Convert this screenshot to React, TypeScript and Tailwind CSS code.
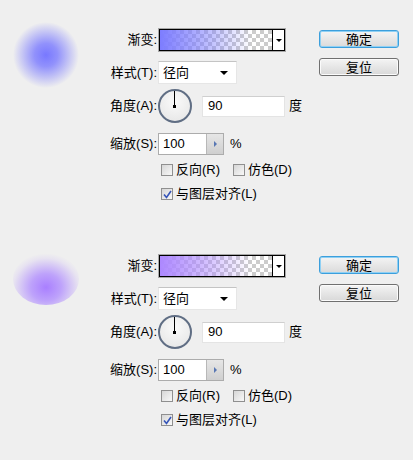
import React from "react";

type PanelProps = {
  blobClass: string;
  swatchClass: string;
};

function Checkbox({ checked }: { checked?: boolean }) {
  return (
    <span className="flex h-[12px] w-[12px] items-center justify-center border border-[#8f8f8f] bg-[linear-gradient(135deg,#d6d6d6,#f8f8f8)]">
      {checked ? (
        <svg width="9" height="9" viewBox="0 0 9 9">
          <path d="M1 4.5 L3.5 7.5 L8 1" fill="none" stroke="#3554b8" strokeWidth="1.6" />
        </svg>
      ) : null}
    </span>
  );
}

function Label({ children }: { children: React.ReactNode }) {
  return <span className="w-[58px] shrink-0 pr-[1px] text-right">{children}</span>;
}

function Panel({ blobClass, swatchClass }: PanelProps) {
  return (
    <div className="flex h-[226px]">
      <div className="w-[100px] shrink-0">
        <div className={blobClass} />
      </div>

      <div className="flex w-[219px] shrink-0 flex-col pt-[28px]">
        <div className="flex h-[24px] items-center">
          <Label>渐变:</Label>
          <div className="flex h-[24px] w-[128px] border border-[#a8a8a8]">
            <div className="flex flex-1 border border-black">
              <div className="flex-1 bg-[conic-gradient(#cccccc_25%,#ffffff_0_50%,#cccccc_0_75%,#ffffff_0)] bg-[length:8px_8px]">
                <div className={swatchClass} />
              </div>
              <div className="flex w-[12px] items-center justify-center border-l border-black bg-white">
                <span className="h-0 w-0 border-x-[3px] border-t-[3px] border-x-transparent border-t-black" />
              </div>
            </div>
          </div>
        </div>

        <div className="mt-[9px] flex h-[23px] items-center">
          <Label>样式(T):</Label>
          <div className="flex h-[23px] w-[79px] items-center justify-between border border-[#e6e6e6] border-t-[#c4c4c4] bg-white pl-[4px] pr-[8px]">
            <span>径向</span>
            <span className="h-0 w-0 border-x-[4px] border-t-[4px] border-x-transparent border-t-black" />
          </div>
        </div>

        <div className="mt-[5px] flex h-[34px] items-center">
          <Label>角度(A):</Label>
          <div className="relative h-[34px] w-[34px] rounded-full border-2 border-[#606e84] bg-[radial-gradient(circle_at_50%_35%,#fafafa,#e4e4e4)]">
            <span className="absolute left-[14px] top-0 h-[15px] w-[1px] bg-black" />
            <span className="absolute left-[13px] top-[14px] h-[3px] w-[3px] bg-black" />
          </div>
          <div className="ml-[10px] flex h-[21px] w-[83px] items-center border border-[#e4e4e4] border-t-[#cfcfcf] bg-white pl-[5px]">
            90
          </div>
          <span className="ml-[4px]">度</span>
        </div>

        <div className="mt-[10px] flex h-[22px] items-center">
          <Label>缩放(S):</Label>
          <div className="flex h-[22px] w-[66px] border border-[#acacac] bg-white">
            <div className="flex flex-1 items-center pl-[4px]">100</div>
            <div className="flex w-[17px] items-center justify-center border-l border-[#b8b8b8] bg-[linear-gradient(#e6e6e6,#cfcfcf)]">
              <span className="h-0 w-0 border-y-[3px] border-l-[3px] border-y-transparent border-l-[#5877b3]" />
            </div>
          </div>
          <span className="ml-[6px]">%</span>
        </div>

        <div className="ml-[61px] mt-[8px] flex h-[14px] items-center">
          <Checkbox />
          <span className="ml-[3px] w-[57px]">反向(R)</span>
          <Checkbox />
          <span className="ml-[3px]">仿色(D)</span>
        </div>

        <div className="ml-[61px] mt-[10px] flex h-[14px] items-center">
          <Checkbox checked />
          <span className="ml-[3px]">与图层对齐(L)</span>
        </div>
      </div>

      <div className="flex flex-col gap-[10px] pt-[30px]">
        <button
          type="button"
          className="flex h-[18px] w-[80px] items-center justify-center rounded-[3px] border border-[#3c9fdc] bg-[linear-gradient(#f4f4f4,#dadada)] shadow-[inset_0_0_0_1px_#8fd0f4] text-[13px] leading-none"
        >
          确定
        </button>
        <button
          type="button"
          className="flex h-[18px] w-[80px] items-center justify-center rounded-[3px] border border-[#707070] bg-[linear-gradient(#f4f4f4,#d8d8d8)] shadow-[inset_0_0_0_1px_#fbfbfb] text-[13px] leading-none"
        >
          复位
        </button>
      </div>
    </div>
  );
}

export default function App() {
  return (
    <div className="min-h-[460px] w-[413px] bg-[#efefef] font-['Liberation_Sans','Noto_Sans_CJK_SC',sans-serif] text-[13px] text-black">
      <Panel
        blobClass="ml-[13px] mt-[22px] h-[66px] w-[66px] rounded-full bg-[radial-gradient(closest-side,#7878ff_0%,rgba(122,122,255,0.8)_35%,rgba(122,122,255,0)_100%)]"
        swatchClass="h-full w-full bg-[linear-gradient(to_right,#7d7dff_0%,rgba(125,125,255,0.55)_40%,rgba(125,125,255,0)_82%)]"
      />
      <Panel
        blobClass="ml-[13px] mt-[27px] h-[52px] w-[66px] rounded-[50%] bg-[radial-gradient(38px_34px_at_50%_66%,#a97fff_0%,rgba(173,136,255,0.75)_40%,rgba(173,136,255,0.12)_85%,rgba(173,136,255,0)_100%)]"
        swatchClass="h-full w-full bg-[linear-gradient(to_right,#ad88ff_0%,rgba(173,136,255,0.55)_40%,rgba(173,136,255,0)_82%)]"
      />
    </div>
  );
}
